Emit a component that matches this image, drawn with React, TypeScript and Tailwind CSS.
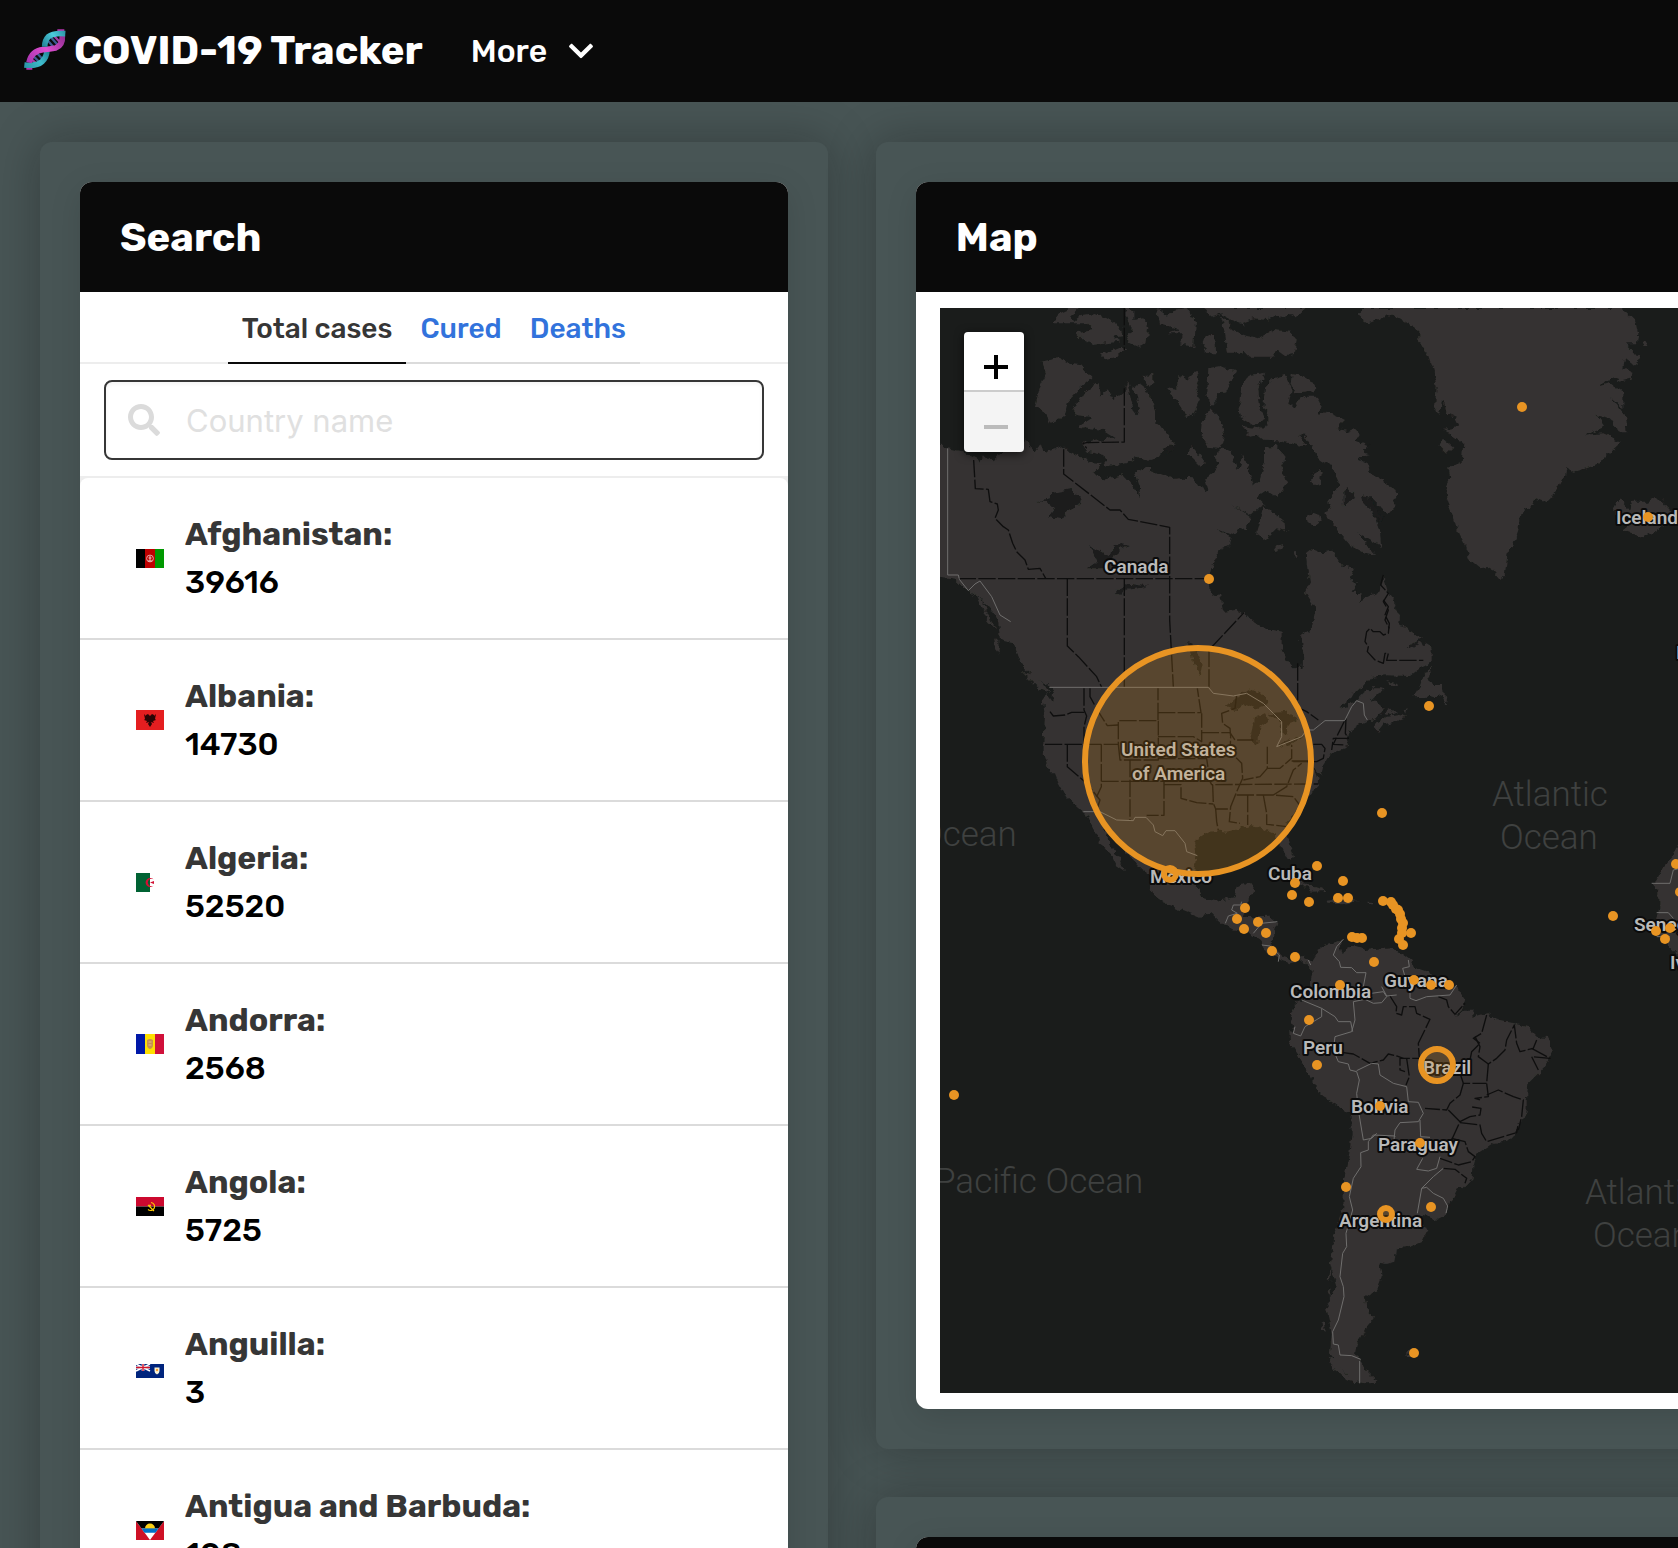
import React from 'react';
import { FaChevronDown, FaSearch } from 'react-icons/fa';

type Segment = [number, number, string];

/** Joins chart segments, each given relative to its own origin, into one outline. */
function outline(...segments: Segment[]): string {
  return segments
    .map(([dx, dy, pts]) =>
      pts
        .trim()
        .split(/\s+/)
        .map((p) => {
          const [x, y] = p.split(',').map(Number);
          return `${x + dx},${y + dy}`;
        })
        .join(' '),
    )
    .join(' ');
}

const northAmerica = outline(
  [0, 0, '50,432 83,445 130,455 160,470 175,478 178,488 185,470 212,470 218,486 236,462 250,458 280,452 300,455 316,412 330,440 345,455 363,430 370,458 400,450 430,440 450,460 490,475 515,490 548,492 520,520 530,530 570,537 612,525 640,555 658,592 660,560 645,520 690,500'],
  [690, 0, '0,510 40,525 65,537 100,533 125,535 145,545 163,580 175,570 165,535 190,515 205,490 195,465 220,445 245,455 262,510 280,465 295,505 312,558 326,545 345,480 345,440 375,438 408,475 395,500 412,548 380,590 350,570 320,590 350,612 330,620 310,640 300,645 242,610 302,650 290,685 265,690 245,705 200,686 245,715 240,735 210,750 190,790 178,836 178,870 190,890 210,882 220,935 260,930 285,940 310,965 345,990'],
  [900, 900, '160,90 185,95 185,150 200,180 220,205 248,200 250,160 240,110 275,85 285,40'],
  [690, 0, '495,925 465,880 480,850 475,800 470,760 485,748 515,760 545,752 560,775 580,800 610,805 600,835 620,850 605,878 635,880 630,905 680,880 690,865 700,830 715,880 740,910 735,930 750,945 748,975 770,980'],
  [900, 900, '565,95 605,110 600,125 635,145 635,180 620,195 600,205 570,228 500,226 455,230 430,260 400,275 385,300 355,325 400,310 430,280 460,262 485,262 490,272 470,285 455,300 480,315 490,330 470,355 440,362 415,375 385,395 380,420 387,440 345,455 325,470 310,495 303,525 290,510 280,490 290,530 298,555 280,575'],
  [0, 990, '1160,500 1130,545 1100,580 1098,610 1108,645 1122,680 1105,687 1085,655 1060,610 1030,595 990,588 950,598 920,605 900,602 870,605 835,625 825,650 830,675 823,720 830,765 850,805 885,813 920,808 945,800 950,770 970,760 1005,765 1000,790 985,810 985,825 970,860 1010,862 1050,860 1072,880 1060,915 1058,940 1075,965 1095,982 1120,988 1150,980 1180,995 1170,1015 1150,990 1110,1000 1080,990 1040,965 1020,930 990,910 930,895 900,875 875,850 840,860 790,840 735,820 700,795 690,765 690,735 660,715 620,670 600,640 575,620 540,560 490,545 440,500 415,455 405,430 390,430 372,380 370,340 375,260 367,200 380,190 400,218 402,185 385,165 345,145'],
  [0, 0, '310,1105 300,1080 280,1030 240,1020 235,970 215,930 180,890 140,870 110,840 50,832'],
);

const southAmerica = outline(
  [780, 1620, '385,375 395,360 420,320 455,312 490,298 478,325 487,345 500,325 520,318 560,330 600,325 635,322 670,345 690,360 705,385 750,400 790,430 830,440 855,480 850,500 825,525 850,512 880,512 880,530 920,520 950,540 1000,550 1040,560 1070,590 1105,595 1118,625 1110,655 1085,690 1060,715 1045,730 1040,780'],
  [780, 2400, '1040,30 1025,70 1000,110 985,125 945,128 890,165 880,200 878,235 850,265 835,262 810,310 795,345 770,357 715,345 740,395 725,425 690,440 648,445 643,485 620,492 598,488 605,530 590,570 555,595 560,625 585,650 560,680 545,710 530,735 525,760 545,790 560,815 595,848 560,850 520,845 480,800 450,760 455,700 438,620 470,560 450,490 460,410 490,330 492,240 508,160 515,100 515,40'],
  [780, 1620, '490,810 420,760 385,700 355,645 330,605 328,570 345,575 330,530 345,495 385,465 397,400'],
);

const land: string[] = [
  northAmerica,
  southAmerica,
  // Baja California and Vancouver Island
  outline([0, 990, '490,540 530,548 548,590 570,640 600,690 617,727 590,708 575,678 550,650 535,640 540,625 515,590']),
  outline([0, 990, '305,125 340,135 370,160 388,188 360,178 330,150']),
  // Pacific coast archipelago
  outline([0, 0, '165,880 190,905 200,930 185,925']),
  outline([0, 0, '185,920 210,945 225,985 205,965']),
  outline([0, 0, '222,1018 240,1035 238,1062 226,1045']),
  // Arctic islands
  outline([0, 0, '365,185 415,175 450,192 480,195 515,235 480,265 440,310 430,350 390,368 375,340 345,318 360,260 378,220']),
  outline([0, 0, '460,330 490,280 535,245 543,290 560,265 583,300 613,275 622,245 640,330 650,343 660,325 640,260 665,250 690,290 705,330 705,370 735,390 765,430 740,440 720,470 690,480 650,470 620,490 560,498 550,465 500,455 490,430 585,412 550,390 475,380 520,352 470,345']),
  outline([0, 0, '740,265 775,270 775,225 800,240 830,212 835,240 825,265 840,300 825,335 803,355 775,310']),
  outline([0, 0, '668,228 700,225 700,250 690,262']),
  outline([0, 0, '865,205 900,198 945,212 917,278 885,280 890,300 870,320 862,280']),
  outline([0, 0, '398,70 420,40 450,26 480,24 450,50 460,65 485,45 520,40 560,55 600,80 610,105 580,110 600,125 560,130 520,135 490,120 470,100 520,90 500,70']),
  outline([0, 0, '615,24 640,30 640,60 670,55 685,80 680,125 655,142 620,125 635,90']),
  outline([0, 0, '543,165 600,140 625,145 590,170 555,178']),
  outline([0, 0, '710,24 745,50 760,30 800,24 825,60 820,138 780,130 795,100 740,100 775,88 720,70']),
  outline([690, 0, '155,138 165,110 185,102 200,125 201,160 180,160']),
  outline([690, 0, '160,24 470,24 440,52 420,42 400,55 370,45 350,60 310,55 280,65 290,85 275,72 240,60 220,40 180,50']),
  outline([690, 0, '210,45 240,70 245,90 290,108 330,115 370,90 425,95 440,120 430,165 405,168 380,150 370,170 300,170 285,155 265,165 250,155 233,155 225,100']),
  outline([690, 0, '110,460 130,440 168,490 150,497']),
  outline([690, 0, '158,370 180,328 212,360 223,405 212,445 175,440 155,410']),
  outline([690, 0, '345,218 300,225 275,260 265,320 270,350 310,375 345,360 330,320 325,270']),
  outline([690, 0, '345,260 370,235 405,225 425,270 415,315 432,322 445,300 465,290 500,290 515,310 505,345 530,335 555,345 585,360 560,385 598,395 615,388 632,400 620,420 655,435 640,455 660,465 620,475 650,490 670,530 700,535 715,560 745,575 730,600 740,615 712,645 690,620 660,590 650,600 670,640 690,690 693,740 625,700 675,765 640,757 600,735 570,700 550,670 520,640 545,630 535,605 570,555 545,500 510,480 460,400 448,405 470,440 400,425 340,422 320,405 300,410 275,378 325,385 355,372 355,345 340,320']),
  outline([690, 0, '425,222 460,228 480,240 498,270 435,280 422,250']),
  outline([690, 0, '340,618 400,660 403,690 425,700 380,685 345,720 318,700 330,660']),
  outline([690, 0, '370,752 380,738 400,732 390,750 375,757']),
  outline([690, 0, '432,762 440,752 442,770 436,778']),
  outline([690, 0, '470,655 485,638 508,645 512,665 495,678 474,670']),
  outline([690, 0, '483,545 490,515 505,507 518,520 512,552 495,555']),
  // Greenland
  outline([1140, 0, '190,24 965,24 1005,60 1015,105 1010,130 975,130 1000,155 1020,180 1000,195 975,175 970,205 1000,220 998,235 960,245 935,235 890,260 930,250 970,275 970,325 930,290 975,345 980,400 960,400 930,355 890,345 915,380 855,404 910,400 965,425 920,465 900,490 860,505 820,515 800,502 795,528 785,540 755,595 735,605 705,595 700,615 665,635 655,690 640,735 625,745 615,820 600,838 570,800 540,805 510,780 495,740 475,700 460,650 440,600 435,560 450,530 445,500 485,490 490,430 430,390 480,380 465,350 440,340 430,300 415,345 405,320 410,260 395,200 385,170 355,120 355,90 300,55 265,48 205,70 170,45']),
  outline([1140, 0, '415,435 430,415 460,440 440,460']),
  outline([1140, 0, '1030,125 1040,120 1048,138 1030,138']),
  outline([1140, 0, '945,625 960,598 985,630 1000,605 1040,605 1075,592 1110,630 1105,670 1060,700 1030,712 965,690 985,675 950,650']),
  // Newfoundland and the Maritimes
  outline([900, 900, '632,200 635,215 620,240 640,255 665,255 668,275 685,290 680,315 665,285 645,295 620,290 580,292 600,260 610,230']),
  outline([900, 900, '465,385 470,368 500,350 540,345 562,350 520,365 490,375 475,395']),
  outline([900, 900, '484,345 505,328 535,336 515,345 495,340']),
  outline([900, 900, '545,340 560,318 556,340']),
  outline([900, 900, '498,240 520,245 535,257 515,252']),
  // Caribbean
  outline([780, 1620, '300,105 330,108 370,128 400,138 440,153 395,155 380,140 340,125']),
  outline([780, 1620, '443,182 480,178 540,183 500,190 445,188']),
  outline([780, 1620, '565,185 585,186 585,190 567,190']),
  // West Africa
  outline([780, 1620, '1900,0 1494,10 1480,45 1450,80 1430,120 1418,135 1435,155 1435,205 1428,240 1425,275 1455,300 1475,325 1494,345 1560,390 1900,380']),
  // Falklands
  outline([780, 2400, '675,768 690,752 715,752 700,768']),
  // Patagonian fjords
  outline([780, 2400, '448,515 455,505 450,545 442,540']),
  outline([780, 2400, '440,570 448,562 452,590 444,585']),
  outline([780, 2400, '425,665 435,660 437,695 428,690']),
  outline([780, 2400, '440,770 470,780 500,825 540,850 500,838 465,810']),
];

const water: string[] = [
  outline([0, 0, '352,603 385,600 400,578 455,567 460,585 485,590 480,612 445,630 425,658 385,650 405,625 390,610']),
  outline([0, 0, '508,735 560,765 600,732 630,738 600,750 575,775 555,805 500,805 530,785']),
  outline([0, 0, '590,880 615,850 685,860 630,868 600,884']),
  outline([0, 0, '800,1030 820,1035 835,1070 848,1095 842,1128 825,1100 815,1060']),
  outline([0, 990, '915,230 945,205 985,175 1020,190 1045,215 1040,225 1010,235 975,222 950,240']),
  outline([0, 990, '1005,262 1035,250 1045,270 1018,290 1015,340 1000,350 992,320']),
  outline([0, 990, '1045,250 1100,245 1135,270 1110,280 1100,310 1085,310 1080,270']),
  outline([0, 990, '1072,345 1115,328 1150,318 1120,338 1080,350']),
  outline([690, 0, '580,570 590,565 620,590 600,605 582,620']),
  outline([690, 0, '635,600 645,585 700,650 693,665']),
  outline([900, 900, '560,140 600,118 605,122 570,145']),
  outline([690, 0, '35,445 60,435 75,430 72,448 50,465 52,450']),
];

const provinceLines: string[] = [
  outline([0, 0, '613,24 613,150']),
  outline([0, 0, '613,265 613,426 500,428 490,430 500,445']),
  outline([0, 0, '161,480 166,566 205,568 210,605 232,612 235,630 225,655 250,680 265,690 278,730 290,755 315,780 325,808 360,805 377,835']),
  outline([0, 0, '431,448 431,522 570,630 600,630 625,658 749,682 749,960 760,1160']),
  outline([0, 0, '116,836 860,836']),
  outline([0, 0, '442,836 442,1038 475,1070 530,1130 545,1162']),
  outline([0, 0, '613,836 613,1162']),
  outline([0, 0, '867,1160 867,1050 972,938']),
  outline([0, 990, '390,245 400,258 435,255 455,247 495,247']),
  outline([0, 990, '492,175 492,240 500,258 492,290 492,343 370,343']),
  outline([0, 990, '510,175 510,200 535,245 562,287 595,285']),
  outline([0, 990, '442,343 442,410 500,460 540,510 530,540']),
  outline([0, 990, '492,343 595,343 595,272 714,272 714,175']),
  outline([0, 990, '595,343 600,390 715,390 715,272']),
  outline([0, 990, '544,343 544,470 530,500']),
  outline([0, 990, '544,454 875,454']),
  outline([0, 990, '630,390 630,570']),
  outline([0, 990, '732,454 732,556 680,556']),
  outline([0, 990, '732,464 783,464 783,505 830,518 880,522']),
  outline([0, 990, '714,248 843,248 832,175']),
  outline([0, 990, '714,320 820,320 845,335 845,250']),
  outline([0, 990, '715,386 860,386 870,454 875,464 1195,462']),
  outline([0, 990, '878,464 880,520 887,537 932,537']),
  outline([0, 990, '887,537 890,575 895,602']),
  outline([0, 990, '845,308 930,308 945,330 1000,330']),
  outline([0, 990, '950,195 945,235 905,250 908,280 930,295 932,320 930,365 965,400 968,445 950,485 932,530 928,575 960,580']),
  outline([0, 990, '1042,350 1042,415 1020,440 970,450']),
  outline([0, 990, '1042,415 1080,415 1115,385 1115,345']),
  outline([0, 990, '1115,393 1175,393']),
  outline([0, 990, '950,495 1060,495 1120,500 1150,540']),
  outline([0, 990, '983,495 983,585']),
  outline([0, 990, '1030,495 1040,550 1040,583 1100,590']),
  outline([0, 990, '1060,495 1100,470 1120,420 1145,400']),
  outline([0, 990, '1133,100 1133,232 1160,245 1195,270']),
  outline([900, 900, '280,433 305,433 315,445 310,475 290,485 220,485']),
  outline([900, 900, '378,355 376,400 385,415 340,415 335,450']),
  outline([900, 900, '375,360 355,400 340,433 372,435']),
  outline([900, 900, '490,0 505,20 495,45 508,70 505,100 490,105 480,95 460,95 450,85 440,95 435,125 445,140 442,155 465,180 490,190 495,160 505,160 500,181 610,181']),
  outline([690, 0, '700,825 692,855 715,880 700,905 715,930 705,960 718,985']),
  outline([780, 1620, '630,468 650,500 648,520 665,525 670,500 705,500 710,520 750,538 715,610 718,655 660,655 660,690 675,695']),
  outline([780, 1620, '775,470 800,480 805,500 825,523 855,490']),
  outline([780, 1620, '490,638 520,642 570,670 610,660 625,642 650,648 670,655']),
  outline([780, 1620, '920,525 905,580 880,595 900,610 875,635 870,660']),
  outline([780, 1620, '885,590 900,620 895,650 925,672 950,655 975,630 980,600 1003,555 1010,610 1020,635 1060,625 1070,600']),
  outline([780, 1620, '925,672 920,730 925,770 885,775 900,780']),
  outline([780, 1620, '840,700 850,730 920,730']),
  outline([780, 1620, '850,730 840,765 810,790 800,810 735,805']),
  outline([780, 1620, '920,765 955,750 1000,770 1030,780 1025,830 1015,870']),
  outline([780, 1620, '1055,625 1110,655 1055,650 1075,690']),
  outline([780, 1620, '680,655 688,710 678,735']),
  outline([780, 1620, '805,810 840,845 815,900']),
  outline([780, 2400, '840,65 870,50 900,45 903,25 870,20']),
  outline([780, 2400, '840,68 900,75 905,100 920,125 1010,98 1015,70']),
  outline([780, 2400, '815,115 855,125 865,155 885,170 875,185 835,195 780,175']),
  outline([780, 2400, '790,205 825,208 860,235 855,250']),
];

const countryLines: string[] = [
  outline([0, 0, '83,445 83,825 115,825 118,838 145,872 165,852 180,843 215,890 240,945 272,965']),
  outline([0, 0, '388,1162 865,1162 880,1180 940,1188 980,1180 1030,1210 1060,1240 1085,1265 1085,1310 1070,1340 1145,1310 1160,1290 1180,1290 1215,1262 1275,1262']),
  outline([900, 900, '375,360 395,320 410,302 430,310 433,345 442,360']),
  outline([0, 990, '490,545 540,545 590,570 640,572 645,562 678,562 700,585 705,605 728,617 738,602 765,602 795,640 800,665 832,677']),
  outline([780, 1620, '185,185 182,195 160,195 155,210 172,220 145,228 136,250']),
  outline([780, 1620, '220,280 245,250 292,245']),
  outline([780, 1620, '246,315 270,318 298,345 295,365']),
  outline([780, 1620, '385,360 392,375']),
  outline([780, 1620, '490,298 470,320 460,345 478,365 482,382 515,383 530,398 558,398 550,440 575,460 610,455 620,470 605,488 580,490 555,478 520,485 525,540 515,575 465,590 460,630']),
  outline([780, 1620, '685,360 688,380 668,385 675,410 690,450 690,475 708,482 740,470 810,465 830,435']),
  outline([780, 1620, '605,440 620,468 650,465']),
  outline([780, 1620, '365,480 425,505 425,530 400,545 375,560 362,588 340,580 345,560']),
  outline([780, 1620, '425,505 465,530 475,545 512,545 518,575']),
  outline([780, 1620, '460,630 475,665 505,672 510,690 530,695 538,720 530,760 535,810 545,870 550,900 575,895 590,880']),
  outline([780, 1620, '530,692 575,670 595,672 600,705 640,730 680,740 685,785 715,787 730,820 715,845 660,848 645,870 642,900']),
  outline([780, 2400, '720,60 722,110 750,112']),
  outline([780, 2400, '645,110 645,108 580,105 565,125 565,150 542,158 543,200 520,235 508,290 518,330 498,400 500,440 488,460 480,530 490,560 492,590 475,660 458,695 460,732 475,735 480,765 515,767 542,778']),
  outline([780, 2400, '539,783 539,850']),
  outline([780, 2400, '728,175 710,208 745,213 770,205 780,170']),
  outline([780, 2400, '790,205 760,230 725,265 712,340']),
  outline([780, 2400, '725,265 740,262 760,280 790,295 803,318 798,340']),
  outline([780, 1620, '1415,130 1470,130 1480,90 1500,85']),
  outline([780, 1620, '1430,218 1465,218 1480,235']),
  outline([780, 1620, '1430,290 1470,290']),
];

const dots: [number, number][] = [
  [1209, 579], [1522, 407], [1648, 517], [1429, 706], [1382, 813], [954, 1095],
  [1317, 866], [1295, 883], [1292, 895], [1309, 902], [1343, 881], [1338, 898], [1348, 898],
  [1245, 908], [1237, 919], [1244, 929], [1258, 922], [1266, 933], [1272, 951], [1295, 957],
  [1352, 937], [1357, 938], [1362, 938], [1383, 901], [1391, 902], [1393, 905], [1396, 909],
  [1398, 910], [1400, 914], [1401, 919], [1403, 923], [1402, 928], [1402, 933], [1399, 939],
  [1403, 945], [1411, 933], [1374, 962], [1340, 985], [1414, 980], [1431, 985], [1449, 985],
  [1309, 1020], [1317, 1065], [1380, 1106], [1613, 916], [1656, 931], [1670, 928], [1665, 939],
  [1676, 864], [1680, 892], [1420, 1143], [1346, 1187], [1431, 1207], [1414, 1353],
];

const rings: [number, number, number][] = [
  [1198, 761, 113],
  [1437, 1065, 16],
  [1386, 1214, 6],
  [1170, 874, 6],
];

const places: [string, number, number][] = [
  ['Canada', 1104, 573],
  ['United States', 1121, 756],
  ['of America', 1132, 780],
  ['Mexico', 1150, 883],
  ['Cuba', 1268, 880],
  ['Colombia', 1290, 998],
  ['Guyana', 1384, 987],
  ['Peru', 1303, 1054],
  ['Brazil', 1423, 1074],
  ['Bolivia', 1351, 1113],
  ['Paraguay', 1378, 1151],
  ['Argentina', 1339, 1227],
  ['Iceland', 1616, 524],
  ['Senegal', 1634, 931],
  ['Ivory Coast', 1670, 969],
  ['Ireland', 1676, 659],
];

const oceans: [string, number, number][] = [
  ['Ocean', 919, 846],
  ['Pacific Ocean', 934, 1193],
  ['Atlantic', 1492, 806],
  ['Ocean', 1500, 849],
  ['Atlantic', 1585, 1204],
  ['Ocean', 1593, 1247],
];

function WorldMap() {
  return (
    <svg
      className="block h-[1085px] w-[1000px] max-w-none font-['Roboto',sans-serif]"
      viewBox="940 308 1000 1085"
      role="img"
      aria-label="World map of cases"
    >
      <defs>
        <filter id="coast" x="0" y="0" width="100%" height="100%">
          <feTurbulence type="fractalNoise" baseFrequency="0.16" numOctaves="2" seed="4" />
          <feDisplacementMap in="SourceGraphic" scale="7" xChannelSelector="R" yChannelSelector="G" />
        </filter>
      </defs>
      <rect x="940" y="308" width="1000" height="1085" fill="#1a1c1b" />
      <g filter="url(#coast)">
        <g transform="translate(920 300) scale(0.33333)">
          {land.map((pts, i) => (
            <polygon key={i} points={pts} fill="#353332" />
          ))}
          {water.map((pts, i) => (
            <polygon key={i} points={pts} fill="#1a1c1b" />
          ))}
        </g>
      </g>
      <g transform="translate(920 300) scale(0.33333)" fill="none" strokeLinejoin="round">
        {provinceLines.map((pts, i) => (
          <polyline key={i} points={pts} stroke="#0e0e0e" strokeWidth="4" strokeDasharray="52 7" />
        ))}
        {countryLines.map((pts, i) => (
          <polyline key={i} points={pts} stroke="#6f6e6d" strokeWidth="3" />
        ))}
      </g>
      <g fill="#3f4140" fontSize="35" fontWeight="300">
        {oceans.map(([name, x, y], i) => (
          <text key={i} x={x} y={y}>
            {name}
          </text>
        ))}
      </g>
      <g fill="#b9b9b9" stroke="#0b0b0b" strokeWidth="4" strokeLinejoin="round" fontSize="19" fontWeight="600" paintOrder="stroke">
        {places.map(([name, x, y]) => (
          <text key={name} x={x} y={y}>
            {name}
          </text>
        ))}
      </g>
      {dots.map(([x, y], i) => (
        <circle key={i} cx={x} cy={y} r="5" fill="#e89423" />
      ))}
      {rings.map(([x, y, r], i) => (
        <circle key={i} cx={x} cy={y} r={r} fill="#e89423" fillOpacity="0.2" stroke="#e89423" strokeWidth="6" />
      ))}
    </svg>
  );
}

function DnaLogo() {
  return (
    <svg className="mb-1 h-[41px] w-[42px] shrink-0" viewBox="23 26 126 123" aria-hidden="true">
      <defs>
        <linearGradient id="cy" gradientUnits="userSpaceOnUse" x1="147" y1="30" x2="76" y2="78">
          <stop offset="0" stopColor="#2a93a6" />
          <stop offset="0.45" stopColor="#4ccbdb" />
          <stop offset="1" stopColor="#1f7f92" />
        </linearGradient>
        <linearGradient id="cb" gradientUnits="userSpaceOnUse" x1="24" y1="140" x2="100" y2="92">
          <stop offset="0" stopColor="#2a93a6" />
          <stop offset="0.55" stopColor="#3fbccd" />
          <stop offset="1" stopColor="#1f7f92" />
        </linearGradient>
        <linearGradient id="mg" gradientUnits="userSpaceOnUse" x1="145" y1="45" x2="35" y2="128">
          <stop offset="0" stopColor="#8f2d90" />
          <stop offset="0.5" stopColor="#df4fd0" />
          <stop offset="1" stopColor="#a834b0" />
        </linearGradient>
      </defs>
      <path d="M123 27h21v8h-21zM30 139h18v9H30z" fill="#b534ad" />
      <g strokeWidth="7">
        <path d="M90 56l24 27M101 48l24 27M46 102l26 26M58 94l24 26" stroke="#3d5c94" />
        <path d="M113 46l18 20M40 112l20 18" stroke="#a33ea4" />
      </g>
      <g fill="none" strokeWidth="17">
        <path d="M24 134Q62 138 78 123Q91 110 92 90" stroke="url(#cb)" />
        <path d="M138 46Q140 74 118 83Q100 87 80 88Q46 91 38 127" stroke="url(#mg)" />
        <path d="M147 40Q110 37 96 49Q85 60 85 79" stroke="url(#cy)" />
      </g>
    </svg>
  );
}

const flagArt: Record<string, { height: number; art: React.ReactNode }> = {
  Afghanistan: {
    height: 19,
    art: (
      <>
        <path d="M0 0h9v19H0z" fill="#000" />
        <path d="M9 0h10v19H9z" fill="#bf0000" />
        <path d="M19 0h9v19h-9z" fill="#009900" />
        <circle cx="14" cy="9.5" r="3.4" fill="none" stroke="#e8a9a9" />
        <path d="M14 7v5M12 12h4M12.500 9h3" stroke="#efc4c4" />
      </>
    ),
  },
  Albania: {
    height: 20,
    art: (
      <>
        <path d="M0 0h28v20H0z" fill="#e41e20" />
        <path d="M14 6l2-2 2 1v1l2-2-1 5 1 1-3 1 1 2-3-1 1 2-2 3-2-3 1-2-3 1 1-2-3-1 1-1-1-5 2 2V5l2-1z" fill="#2a0405" />
      </>
    ),
  },
  Algeria: {
    height: 19,
    art: (
      <>
        <path d="M0 0h28v19H0z" fill="#fff" />
        <path d="M0 0h14v19H0z" fill="#006233" />
        <path d="M17.500 6.300a4.600 4.600 0 1 0 0 6.400 3.700 3.700 0 1 1 0-6.400z" fill="#d21034" />
        <path d="M14 9.500l4-1.500v3z" fill="#d21034" />
      </>
    ),
  },
  Andorra: {
    height: 20,
    art: (
      <>
        <path d="M0 0h9v20H0z" fill="#0018a8" />
        <path d="M9 0h10v20H9z" fill="#fedf00" />
        <path d="M19 0h9v20h-9z" fill="#d0103a" />
        <path d="M11 6q3-2 6 0v5q0 3-3 4-3-1-3-4z" fill="#c98f4f" />
        <path d="M12.500 8h3M12.500 11h3" stroke="#e7b98a" />
      </>
    ),
  },
  Angola: {
    height: 19,
    art: (
      <>
        <path d="M0 0h28v9.500H0z" fill="#cc092f" />
        <path d="M0 9.500h28V19H0z" fill="#000" />
        <path d="M15 5.500a4 4 0 1 1-3 7M12 8l6 6" fill="none" stroke="#ffcb00" strokeWidth="1.200" />
        <circle cx="14" cy="8.500" r="1" fill="#ffcb00" />
      </>
    ),
  },
  Anguilla: {
    height: 14,
    art: (
      <>
        <path d="M0 0h28v14H0z" fill="#00247d" />
        <path d="M0 0l14 7M14 0L0 7" stroke="#fff" strokeWidth="1.600" />
        <path d="M7 0v7M0 3.500h14" stroke="#fff" strokeWidth="2.600" />
        <path d="M7 0v7M0 3.500h14" stroke="#cf142b" strokeWidth="1.400" />
        <path d="M18.500 3.500h5V7q0 2.500-2.500 3.500-2.500-1-2.500-3.500z" fill="#f7f3d8" />
        <circle cx="21" cy="6" r="1.200" fill="#ff9d2e" />
      </>
    ),
  },
  'Antigua and Barbuda': {
    height: 19,
    art: (
      <>
        <path d="M0 0h28v19H0z" fill="#ce1126" />
        <path d="M0 0h28L14 19z" fill="#fff" />
        <path d="M0 0h28l-5.500 7.500h-17z" fill="#000" />
        <path d="M9 7.500a5 5 0 0 1 10 0z" fill="#fcd116" />
        <path d="M5.500 7.500h17l-3 4.200h-11z" fill="#0072c6" />
      </>
    ),
  },
};

const countries: [string, string][] = [
  ['Afghanistan', '39616'],
  ['Albania', '14730'],
  ['Algeria', '52520'],
  ['Andorra', '2568'],
  ['Angola', '5725'],
  ['Anguilla', '3'],
  ['Antigua and Barbuda', '108'],
];

function Flag({ name }: { name: string }) {
  const { height, art } = flagArt[name];
  return (
    <span className="flex h-5 w-7 shrink-0 items-end">
      <svg width="28" height={height} viewBox={`0 0 28 ${height}`} role="img" aria-label={`Flag of ${name}`}>
        {art}
      </svg>
    </span>
  );
}

function Panel({ title, children }: { title: string; children?: React.ReactNode }) {
  return (
    <section className="rounded-xl bg-[#485555] p-10 shadow-[0_0_48px_rgba(10,10,10,0.3)]">
      <div className="overflow-hidden rounded-xl bg-white shadow-[0_8px_32px_rgba(10,10,10,0.12)]">
        <h2 className="bg-[#0a0a0a] px-10 pt-[26px] pb-6 text-[40px] leading-[60px] font-bold text-white">{title}</h2>
        {children}
      </div>
    </section>
  );
}

const tabClass = 'h-[72px] border-b-2 px-[14px] pt-[3px] text-[28px] leading-[42px] font-medium';

export default function App() {
  return (
    <div className="h-screen overflow-hidden bg-[#485555] font-['Rubik','Inter',sans-serif]">
      <header className="relative z-10 flex h-[102px] items-center bg-[#0a0a0a] px-6 text-white">
        <a href="#home" className="flex items-center gap-2">
          <DnaLogo />
          <span className="text-[40px] leading-[60px] font-bold whitespace-nowrap">COVID-19 Tracker</span>
        </a>
        <button type="button" className="ml-12 flex items-center gap-5 text-[32px] leading-[48px] font-medium">
          More
          <FaChevronDown className="size-7" aria-hidden="true" />
        </button>
      </header>

      <main className="flex items-start gap-12 px-10 pt-10">
        <div className="w-[49.3%] shrink-0">
          <Panel title="Search">
            <div role="tablist" className="flex h-[72px] justify-center border-b-2 border-[#ededed]">
              <button type="button" role="tab" aria-selected="true" className={`${tabClass} border-[#0a0a0a] text-[#363636]`}>
                Total cases
              </button>
              <button type="button" role="tab" aria-selected="false" className={`${tabClass} border-[#dbdbdb] text-[#3273dc]`}>
                Cured
              </button>
              <button type="button" role="tab" aria-selected="false" className={`${tabClass} border-[#dbdbdb] text-[#3273dc]`}>
                Deaths
              </button>
            </div>
            <div className="border-b-2 border-[#ededed] px-6 py-4">
              <label className="flex h-20 items-center gap-[26px] rounded-lg border-2 border-[#363636] px-[22px] shadow-[inset_0_2px_4px_rgba(10,10,10,0.05)]">
                <FaSearch className="size-8 shrink-0 text-[#dbdbdb]" aria-hidden="true" />
                <input
                  type="text"
                  aria-label="Country name"
                  placeholder="Country name"
                  className="min-w-0 flex-1 bg-transparent pt-[2px] font-['Inter',sans-serif] text-[31px] leading-[48px] text-[#363636] outline-none placeholder:text-[#e0e0e0]"
                />
              </label>
            </div>
            <ul className="bg-[#ededed]">
              {countries.map(([name, count]) => (
                <li key={name} className="border-b-2 border-[#dbdbdb] bg-white first:rounded-t-lg">
                  <a href={`#${name}`} className="flex items-center gap-[21px] py-8 pr-8 pl-14 text-[32px] leading-[48px]">
                    <Flag name={name} />
                    <span className="flex flex-col">
                      <strong className="font-bold text-[#363636]">{name}:</strong>
                      <span className="font-medium text-black">{count}</span>
                    </span>
                  </a>
                </li>
              ))}
            </ul>
          </Panel>
        </div>

        <div className="flex w-[60vw] shrink-0 flex-col gap-12">
          <Panel title="Map">
            <div className="px-6 py-4">
              <div className="relative overflow-hidden">
                <WorldMap />
                <div className="absolute top-6 left-6 flex w-[60px] flex-col overflow-hidden rounded-[4px] shadow-[0_2px_10px_rgba(0,0,0,0.65)]">
                  <button type="button" aria-label="Zoom in" className="flex h-[60px] items-center justify-center border-b-2 border-[#cccccc] bg-white pt-3 pl-1">
                    <svg className="size-6" viewBox="0 0 24 24" aria-hidden="true">
                      <path d="M12 0v24M0 12h24" stroke="#000" strokeWidth="4" />
                    </svg>
                  </button>
                  <button type="button" aria-label="Zoom out" disabled className="flex h-[60px] items-center justify-center bg-[#f4f4f4] pt-3 pl-1">
                    <svg className="size-6" viewBox="0 0 24 24" aria-hidden="true">
                      <path d="M0 11h24" stroke="#bbbbbb" strokeWidth="4" />
                    </svg>
                  </button>
                </div>
              </div>
            </div>
          </Panel>
          <Panel title="Cases" />
        </div>
      </main>
    </div>
  );
}
